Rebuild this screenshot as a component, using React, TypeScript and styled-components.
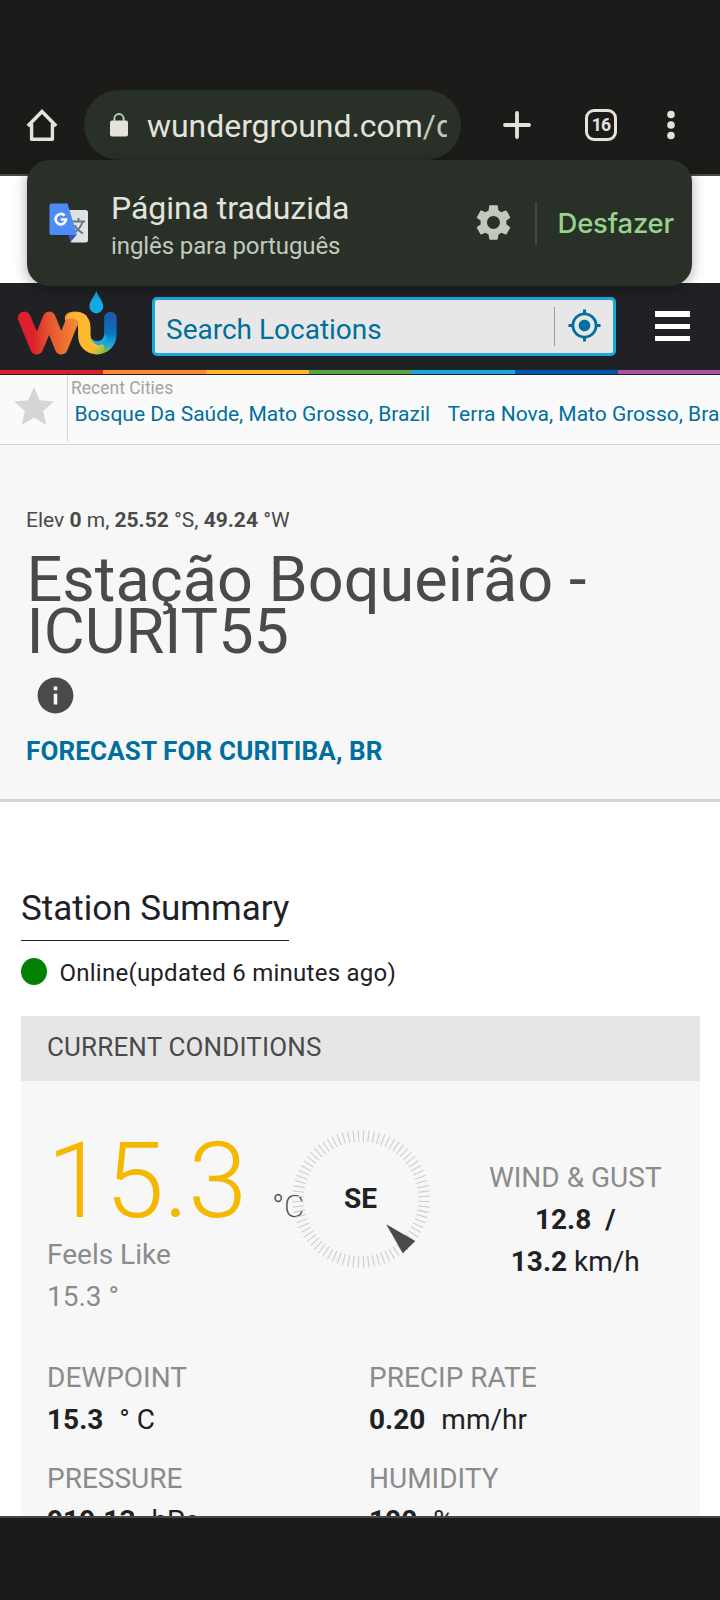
import React from 'react';
import styled, { createGlobalStyle } from 'styled-components';
import { MdGpsFixed, MdInfo, MdSettings, MdStar } from 'react-icons/md';

const GlobalStyle = createGlobalStyle`
  *, *::before, *::after { box-sizing: border-box; }
  body { margin: 0; background: #1b1c19; }
  h1, h2, h3, p { margin: 0; font-weight: 400; }
  svg { display: block; flex: none; }
`;

const Screen = styled.div`
  position: relative;
  width: 720px;
  height: 1600px;
  display: flex;
  flex-direction: column;
  overflow: hidden;
  background: #1b1c19;
  color: #202124;
  font-family: Roboto, 'Liberation Sans', sans-serif;
`;

/* Browser chrome */

const BrowserBar = styled.header`
  display: flex;
  align-items: center;
  flex: none;
  height: 176px;
  padding: 90px 0 14px 24px;
  border-bottom: 2px solid #454b40;
`;

const AddressPill = styled.div`
  display: flex;
  align-items: center;
  width: 377px;
  height: 70px;
  margin-left: 24px;
  padding: 0 14px 0 26px;
  border-radius: 35px;
  background: #293027;
`;

const AddressText = styled.div`
  flex: 1;
  margin-left: 19px;
  padding-top: 2px;
  overflow: hidden;
  white-space: nowrap;
  font-size: 32px;
  letter-spacing: -0.05px;
  line-height: 40px;
  color: #e3e3dc;
`;

const AddressPath = styled.span`
  color: #c1c9bd;
`;

const ChromeActions = styled.div`
  display: flex;
  align-items: center;
  margin-left: 42px;
`;

const TabCount = styled.div`
  display: flex;
  align-items: center;
  justify-content: center;
  width: 32px;
  height: 32px;
  margin: 0 50px 0 54px;
  border: 3.5px solid #e3e3dc;
  border-radius: 9px;
  font-size: 17.5px;
  font-weight: 700;
  letter-spacing: -0.8px;
  line-height: 20px;
  color: #e3e3dc;
`;

const Snackbar = styled.aside`
  position: absolute;
  top: 160px;
  left: 27px;
  display: flex;
  align-items: center;
  width: 665px;
  height: 126px;
  padding-left: 22px;
  border-radius: 22px;
  background: #293027;
  box-shadow: 0 3px 14px rgba(0, 0, 0, 0.32);
`;

const SnackbarText = styled.div`
  width: 361px;
  margin-left: 22px;
  padding-top: 2px;
`;

const SnackbarTitle = styled.div`
  font-size: 32px;
  letter-spacing: -0.05px;
  line-height: 40px;
  color: #e3e3dc;
`;

const SnackbarSubtitle = styled.div`
  margin-top: 3px;
  font-size: 24px;
  letter-spacing: -0.1px;
  line-height: 30px;
  color: #c1c9bd;
`;

const SnackbarActions = styled.div`
  display: flex;
  align-items: center;
  padding-bottom: 1px;
`;

const SnackbarDivider = styled.div`
  width: 2px;
  height: 42px;
  margin: 0 20.5px 0 20px;
  background: #454b40;
`;

const UndoButton = styled.button`
  padding: 0;
  border: 0;
  background: none;
  font-family: Inter, Roboto, sans-serif;
  font-size: 27.5px;
  font-weight: 500;
  letter-spacing: -0.2px;
  line-height: 36px;
  color: #97d38c;
`;

/* Web page */

const Page = styled.main`
  flex: none;
  height: 1340px;
  overflow: hidden;
  background: #fff;
`;

const AdSlot = styled.div`
  height: 107px;
`;

const SiteNav = styled.nav`
  display: flex;
  align-items: flex-start;
  height: 87px;
  padding: 6px 30px 0 17px;
  background: #202125;
`;

const SearchBox = styled.div`
  display: flex;
  align-items: center;
  width: 464px;
  height: 59px;
  margin: 8px 0 0 34px;
  padding: 0 10px 0 11px;
  border: 3px solid #19a9e0;
  border-radius: 5px;
  background: #e7e7e7;
`;

const SearchText = styled.span`
  width: 388px;
  padding-top: 6px;
  font-size: 28px;
  line-height: 36px;
  color: #006f9e;
`;

const SearchDivider = styled.div`
  width: 1px;
  height: 39px;
  margin-right: 11.5px;
  background: #9b9b9b;
`;

const LocateIcon = styled(MdGpsFixed)`
  margin-bottom: 2px;
  color: #006f9e;
`;

const MenuButton = styled.div`
  display: flex;
  flex-direction: column;
  gap: 7px;
  margin: 22px 0 0 39px;
`;

const MenuLine = styled.span<{ $thick?: boolean }>`
  width: 35px;
  height: ${(p) => (p.$thick ? 6 : 5)}px;
  background: #fff;
`;

const Rainbow = styled.div`
  display: flex;
  height: 5px;
  border-bottom: 1px solid #202125;
`;

const RainbowBand = styled.span<{ $color: string }>`
  flex: none;
  width: 103px;
  background: ${(p) => p.$color};
`;

const RecentBar = styled.section`
  display: flex;
  height: 70px;
  border-bottom: 1px solid #d5d5d5;
  background: #fafafa;
`;

const FavoriteCell = styled.div`
  flex: none;
  width: 68px;
  height: 67px;
  padding: 8px 0 0 9.5px;
  border-right: 1px solid #d5d5d5;
  color: #d5d5d5;
`;

const RecentContent = styled.div`
  flex: 1;
  min-width: 0;
  padding: 4px 0 0 3px;
`;

const RecentLabel = styled.div`
  font-size: 17.5px;
  line-height: 18px;
  color: #a3a3a3;
`;

const CityList = styled.div`
  display: flex;
  gap: 17.5px;
  margin-top: 5px;
  padding-left: 3.5px;
  overflow: hidden;
  white-space: nowrap;
  font-size: 21px;
  line-height: 24px;
  color: #006f9e;
`;

const City = styled.span`
  flex: none;
`;

const Hero = styled.section`
  height: 357px;
  padding: 63px 26px 0;
  border-bottom: 3px solid #d5d5d5;
  background: #f7f7f7;
  color: #4a4a4a;
`;

const Elevation = styled.p`
  font-size: 21px;
  line-height: 24px;
`;

const StationName = styled.h1`
  width: 600px;
  margin: 22px 0 0 0.5px;
  font-size: 63px;
  line-height: 52px;
`;

const InfoIcon = styled.div`
  margin: 15.5px 0 0 8px;
`;

const ForecastLink = styled.div`
  margin-top: 19.5px;
  font-size: 26px;
  font-weight: 700;
  letter-spacing: 0.14px;
  line-height: 30px;
  color: #006f9e;
`;

const Summary = styled.section`
  padding: 85px 20px 0 21px;
`;

const SummaryTitle = styled.h2`
  width: 268px;
  height: 54px;
  border-bottom: 1px solid #202124;
  font-size: 35px;
  line-height: 44px;
  white-space: nowrap;
`;

const Status = styled.div`
  display: flex;
  align-items: flex-start;
  gap: 12.5px;
  height: 29px;
  margin-top: 17px;
  font-size: 24px;
  letter-spacing: 0.25px;
  line-height: 27px;
`;

const StatusDot = styled.span`
  width: 26px;
  height: 27px;
  border-radius: 50%;
  background: #008200;
`;

const StatusText = styled.span`
  padding-top: 2px;
`;

const Card = styled.article`
  margin-top: 29px;
  background: #f7f7f7;
`;

const CardHeader = styled.h3`
  height: 65px;
  padding-left: 26px;
  background: #e6e6e6;
  font-size: 26px;
  letter-spacing: 0.15px;
  line-height: 62px;
  color: #4a4a4a;
`;

const CardBody = styled.div`
  padding: 47px 26px 0;
  font-size: 28px;
  line-height: 42px;
`;

const CurrentGrid = styled.div`
  display: grid;
  grid-template-columns: 243.5px 140px 1fr;
  height: 229px;
`;

const Temperature = styled.div`
  display: flex;
  align-items: baseline;
  height: 106px;
  white-space: nowrap;
`;

const TemperatureValue = styled.span`
  font-size: 106px;
  font-weight: 300;
  letter-spacing: -0.6px;
  line-height: 106px;
  color: #f5b800;
`;

const TemperatureUnit = styled.span`
  margin-left: 26px;
  font-size: 31px;
  font-weight: 100;
  -webkit-text-stroke: 0.5px #4a4a4a;
  line-height: 42px;
  color: #4a4a4a;
`;

const Muted = styled.div`
  color: #8b8b8b;
`;

const Compass = styled.div`
  display: grid;
  place-items: center;
  width: 140px;
  height: 140px;
  margin-top: 1px;

  > * { grid-area: 1 / 1; }
`;

const CompassLabel = styled.strong`
  font-weight: 700;
`;

const Wind = styled.div`
  padding: 29px 0 0 46px;
  text-align: center;
  white-space: nowrap;
`;

const Readings = styled.div`
  display: grid;
  grid-template-columns: 322px 1fr;
  row-gap: 17px;
`;

const Strong = styled.strong<{ $gap?: number }>`
  margin-right: ${(p) => p.$gap ?? 0}px;
  font-weight: 700;
`;

const SystemBar = styled.footer`
  flex: 1;
  border-top: 2px solid #434a40;
`;

const HomeIcon = () => (
  <svg width="36" height="36" viewBox="0 0 36 36" fill="none" stroke="#e3e3dc">
    <path d="M3.8 19 18 4.6 32.2 19" strokeWidth="3.6" />
    <path d="M7.6 16.5V32.2H28.4V16.5" strokeWidth="3.4" strokeLinejoin="round" />
  </svg>
);

const LockIcon = () => (
  <svg width="18" height="24" viewBox="0 0 18 24">
    <rect y="7.5" width="18" height="16" rx="2" fill="#e3e3dc" />
    <path d="M4.4 8V5.6a4.6 4.6 0 0 1 9.2 0V8" fill="none" stroke="#c1c9bd" strokeWidth="1.9" />
  </svg>
);

const PlusIcon = () => (
  <svg width="28" height="28" viewBox="0 0 28 28" stroke="#e3e3dc" strokeWidth="3.8" strokeLinecap="round">
    <path d="M14 2v24M2 14h24" />
  </svg>
);

const MoreIcon = () => (
  <svg width="8" height="30" viewBox="0 0 8 30" fill="#e3e3dc">
    <circle cx="4" cy="4.5" r="3.8" />
    <circle cx="4" cy="15" r="3.8" />
    <circle cx="4" cy="25.5" r="3.8" />
  </svg>
);

const TranslateIcon = () => (
  <svg width="40" height="40" viewBox="0 0 40 40">
    <path d="M16 7H36.5A2.5 2.5 0 0 1 39 9.5V37a2.500 2.500 0 0 1-2.500 2.500H22Z" fill="#dfe1e3" />
    <path d="M19.500 31.500H28L21.500 39Z" fill="#3a52bf" />
    <g fill="none" stroke="#607d87" strokeWidth="1.900">
      <path d="M23 18.500H36M29.500 15v3.500M33.500 19C32 24 28 28 24.500 30M25.500 22c2 4 5 6.500 8.500 8.500" />
    </g>
    <path d="M2.500 0.500H18.500L28 32H2.500A2 2 0 0 1 .5 30V2.500A2 2 0 0 1 2.500 .5Z" fill="#4d8bf5" />
    <path d="M15.600 12.600A5.200 5.200 0 1 0 17 16.500H11.800" fill="none" stroke="#fff" strokeWidth="2.700" />
  </svg>
);

const WuLogo = () => (
  <svg width="101" height="68" viewBox="17 289.500 101 68" fill="none">
    <defs>
      <linearGradient id="wu-warm" gradientUnits="userSpaceOnUse" x1="18" y1="0" x2="78" y2="0">
        <stop offset="0.25" stopColor="#dc202c" />
        <stop offset="0.5" stopColor="#e4532f" />
        <stop offset="1" stopColor="#f58a36" />
      </linearGradient>
      <linearGradient id="wu-fold" gradientUnits="userSpaceOnUse" x1="66" y1="322" x2="100" y2="352">
        <stop offset="0" stopColor="#f39a31" />
        <stop offset="0.2" stopColor="#fdb730" />
        <stop offset="0.85" stopColor="#fdb92f" />
        <stop offset="1" stopColor="#a9c23a" />
      </linearGradient>
      <linearGradient id="wu-cool" gradientUnits="userSpaceOnUse" x1="0" y1="313" x2="0" y2="352">
        <stop offset="0" stopColor="#2257a8" />
        <stop offset="0.5" stopColor="#0872bf" />
        <stop offset="0.82" stopColor="#19a8df" />
        <stop offset="1" stopColor="#7fba45" />
      </linearGradient>
    </defs>
    <path d="M110.400 318.500V334C110.400 343 105 348.300 97 348.800" stroke="url(#wu-cool)" strokeWidth="12.500" strokeLinecap="round" />
    <path d="M71 319C78 316.500 84.300 320 84.300 328V335C84.300 344 89 348.600 98 348.600" stroke="url(#wu-fold)" strokeWidth="12.500" strokeLinecap="round" />
    <path d="M90.500 336C92 343.500 103 344 104.500 335L107 338C105 348 93 349 90.500 336Z" fill="#19a8df" />
    <path d="M24.300 318.500 36.700 348.600 49.300 318.500 61.300 348.600 72 322" stroke="url(#wu-warm)" strokeWidth="12.800" strokeLinecap="round" strokeLinejoin="round" />
    <path d="M67.500 316.500C72 311.500 82 311.300 87 316.500L84 324 78.500 322C76 319 71.500 317.500 66.500 320Z" fill="#fdb730" />
    <path d="M96.300 291.500C98 297 103.200 301.500 103.200 307A6.900 6.900 0 0 1 89.400 307C89.400 301.500 94.600 297 96.300 291.500Z" fill="#16a9e1" />
  </svg>
);

const TICKS = Array.from({ length: 80 }, (_, i) => i * 4.5 + 2.25);

const CompassDial = () => (
  <svg width="140" height="140" viewBox="-70 -70 140 140">
    {TICKS.map((angle) => (
      <line key={angle} y1="-68.8" y2="-57.3" stroke="#cecece" strokeWidth="1.15" transform={`rotate(${angle})`} />
    ))}
    <path d="M25.200 25.300 54.200 42 41.800 54.300Z" fill="#4a4a4a" />
  </svg>
);

const bands = ['#db1f2c', '#ff8831', '#feb72b', '#5ba245', '#18a8dd', '#0053b0', '#af52a0'];

const cities = ['Bosque Da Saúde, Mato Grosso, Brazil', 'Terra Nova, Mato Grosso, Brazil'];

const readings = [
  { label: 'DEWPOINT', value: '15.3', unit: '° C' },
  { label: 'PRECIP RATE', value: '0.20', unit: 'mm/hr' },
  { label: 'PRESSURE', value: '919.13', unit: 'hPa' },
  { label: 'HUMIDITY', value: '100', unit: '%' },
];

export default function App() {
  return (
    <Screen>
      <GlobalStyle />
      <BrowserBar>
        <HomeIcon />
        <AddressPill>
          <LockIcon />
          <AddressText>
            wunderground.com<AddressPath>/dashboard</AddressPath>
          </AddressText>
        </AddressPill>
        <ChromeActions>
          <PlusIcon />
          <TabCount>16</TabCount>
          <MoreIcon />
        </ChromeActions>
      </BrowserBar>

      <Page>
        <AdSlot />
        <SiteNav>
          <WuLogo />
          <SearchBox>
            <SearchText>Search Locations</SearchText>
            <SearchDivider />
            <LocateIcon size={35} />
          </SearchBox>
          <MenuButton>
            <MenuLine $thick />
            <MenuLine />
            <MenuLine />
          </MenuButton>
        </SiteNav>
        <Rainbow>
          {bands.map((color) => (
            <RainbowBand key={color} $color={color} />
          ))}
        </Rainbow>

        <RecentBar>
          <FavoriteCell>
            <MdStar size={48} />
          </FavoriteCell>
          <RecentContent>
            <RecentLabel>Recent Cities</RecentLabel>
            <CityList>
              {cities.map((city) => (
                <City key={city}>{city}</City>
              ))}
            </CityList>
          </RecentContent>
        </RecentBar>

        <Hero>
          <Elevation>
            Elev <Strong>0</Strong> m, <Strong>25.52</Strong> °S, <Strong>49.24</Strong> °W
          </Elevation>
          <StationName>Estação Boqueirão - ICURIT55</StationName>
          <InfoIcon>
            <MdInfo size={43} />
          </InfoIcon>
          <ForecastLink>FORECAST FOR CURITIBA, BR</ForecastLink>
        </Hero>

        <Summary>
          <SummaryTitle>Station Summary</SummaryTitle>
          <Status>
            <StatusDot />
            <StatusText>Online(updated 6 minutes ago)</StatusText>
          </Status>
          <Card>
            <CardHeader>CURRENT CONDITIONS</CardHeader>
            <CardBody>
              <CurrentGrid>
                <div>
                  <Temperature>
                    <TemperatureValue>15.3</TemperatureValue>
                    <TemperatureUnit>°C</TemperatureUnit>
                  </Temperature>
                  <Muted>Feels Like</Muted>
                  <Muted>15.3 °</Muted>
                </div>
                <Compass>
                  <CompassDial />
                  <CompassLabel>SE</CompassLabel>
                </Compass>
                <Wind>
                  <Muted>WIND &amp; GUST</Muted>
                  <div>
                    <Strong $gap={14}>12.8</Strong>
                    <Strong>/</Strong>
                  </div>
                  <div>
                    <Strong>13.2</Strong> km/h
                  </div>
                </Wind>
              </CurrentGrid>
              <Readings>
                {readings.map(({ label, value, unit }) => (
                  <div key={label}>
                    <Muted>{label}</Muted>
                    <Strong $gap={16}>{value}</Strong>
                    {unit}
                  </div>
                ))}
              </Readings>
            </CardBody>
          </Card>
        </Summary>
      </Page>

      <SystemBar />

      <Snackbar>
        <TranslateIcon />
        <SnackbarText>
          <SnackbarTitle>Página traduzida</SnackbarTitle>
          <SnackbarSubtitle>inglês para português</SnackbarSubtitle>
        </SnackbarText>
        <SnackbarActions>
          <MdSettings size={43} color="#c1c9bd" />
          <SnackbarDivider />
          <UndoButton>Desfazer</UndoButton>
        </SnackbarActions>
      </Snackbar>
    </Screen>
  );
}
